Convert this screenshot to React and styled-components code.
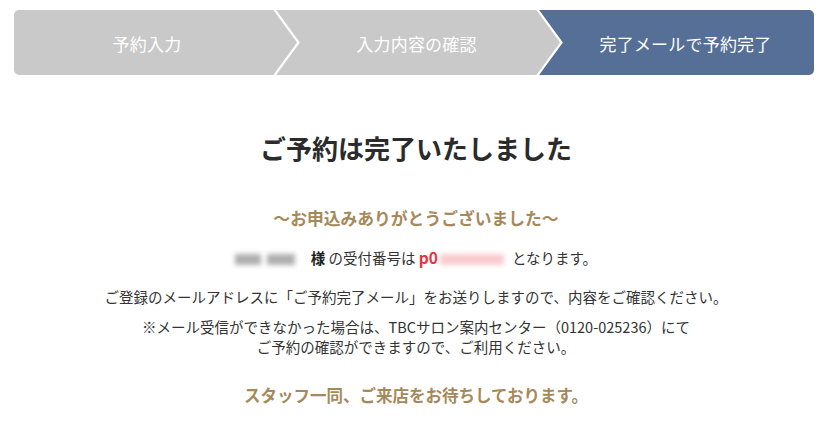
import React from "react";
import styled, { createGlobalStyle } from "styled-components";

const GlobalStyle = createGlobalStyle`
  html, body {
    margin: 0;
    padding: 0;
    background: #fff;
  }
  body {
    font-family: "Noto Sans CJK JP", "Noto Sans", sans-serif;
    color: #333;
  }
`;

const GRAY = "#c9c9c9";
const BLUE = "#566f96";
const GOLD = "#a6895a";

const Page = styled.div`
  width: 832px;
  padding-top: 10px;
`;

const StepBar = styled.ol`
  list-style: none;
  margin: 0 0 0 14px;
  padding: 0;
  width: 800px;
  height: 65px;
  display: flex;
  border-radius: 5px;
  overflow: hidden;
`;

const Step = styled.li`
  position: relative;
  width: ${(p) => p.$w}px;
  flex: none;
  display: flex;
  align-items: center;
  justify-content: center;
  padding-left: ${(p) => p.$pad}px;
  padding-top: 1px;
  box-sizing: border-box;
  background: ${(p) => (p.$active ? BLUE : GRAY)};
  color: #fff;
  font-size: 17px;
  letter-spacing: 0.2px;
`;

const Chevron = styled.svg`
  position: absolute;
  top: 0;
  left: 100%;
  width: 26px;
  height: 65px;
  z-index: 1;
  overflow: visible;
`;

const Main = styled.main`
  display: flex;
  flex-direction: column;
  align-items: center;
  text-align: center;
`;

const Title = styled.h1`
  margin: 55px 0 0;
  font-size: 26px;
  line-height: 36px;
  font-weight: 700;
  color: #2b2b2b;
`;

const Lead = styled.p`
  margin: ${(p) => p.$mt}px 0 0;
  font-size: ${(p) => p.$size}px;
  line-height: 26px;
  font-weight: 700;
  color: ${GOLD};
`;

const Text = styled.p`
  margin: ${(p) => p.$mt}px 0 0;
  font-size: 14.5px;
  line-height: 20px;
  color: #333;
`;

const Redacted = styled.span`
  display: inline-block;
  vertical-align: -1px;
  width: ${(p) => p.$w}px;
  height: 11px;
  margin: ${(p) => p.$margin};
  background: ${(p) => p.$color};
  filter: blur(2.5px);
  opacity: 0.85;
`;

const Strong = styled.b`
  font-weight: 700;
  color: #222;
`;

const Number = styled.b`
  font-weight: 700;
  color: #e8323f;
  font-size: 15.5px;
`;

const steps = [
  { label: "予約入力", w: 260, pad: 6 },
  { label: "入力内容の確認", w: 263, pad: 22 },
  { label: "完了メールで予約完了", w: 277, pad: 20, active: true },
];

export default function App() {
  return (
    <>
      <GlobalStyle />
      <Page>
        <StepBar>
          {steps.map((s, i) => (
            <Step key={s.label} $w={s.w} $pad={s.pad} $active={s.active}>
              {s.label}
              {i < steps.length - 1 && (
                <Chevron viewBox="0 0 26 65">
                  <polygon points="0,0 24,32.5 0,65" fill={GRAY} />
                  <polyline
                    points="0,-1 24.5,32.5 0,66"
                    fill="none"
                    stroke="#fff"
                    strokeWidth="2.2"
                  />
                </Chevron>
              )}
            </Step>
          ))}
        </StepBar>

        <Main>
          <Title>ご予約は完了いたしました</Title>
          <Lead $mt={39} $size={16.8}>～お申込みありがとうございました～</Lead>
          <Text $mt={16}>
            <Redacted $w={26} $color="#a0a0a0" $margin="0 6px 0 0" />
            <Redacted $w={28} $color="#a0a0a0" $margin="0 16px 0 0" />
            <Strong>様</Strong> の受付番号は <Number>p0</Number>
            <Redacted $w={64} $color="#f8c2c6" $margin="0 8px 0 2px" />
            となります。
          </Text>
          <Text $mt={19}>
            ご登録のメールアドレスに「ご予約完了メール」をお送りしますので、内容をご確認ください。
          </Text>
          <Text $mt={10}>
            ※メール受信ができなかった場合は、TBCサロン案内センター（0120-025236）にて
            <br />
            ご予約の確認ができますので、ご利用ください。
          </Text>
          <Lead $mt={25} $size={16.5}>スタッフ一同、ご来店をお待ちしております。</Lead>
        </Main>
      </Page>
    </>
  );
}
